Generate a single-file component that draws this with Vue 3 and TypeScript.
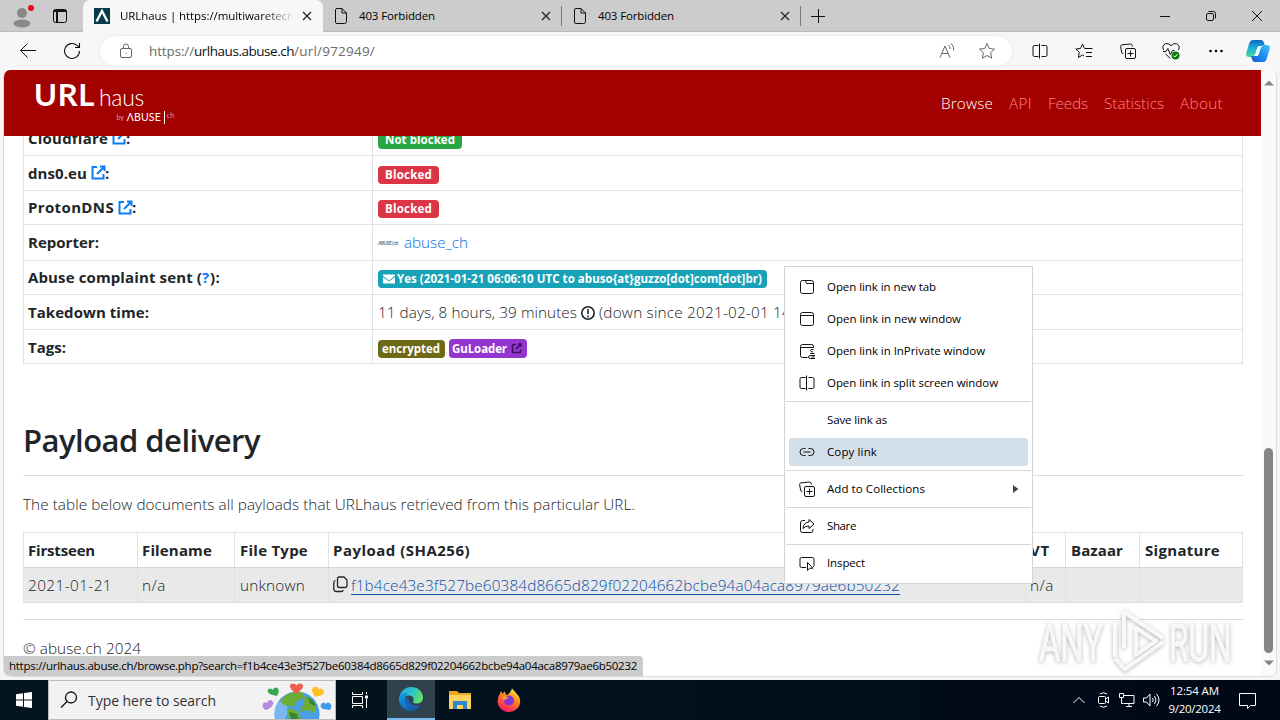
<script setup lang="ts">
interface Line { text: string; width: number }
interface MenuItem extends Line { icon?: string; active?: boolean; submenu?: boolean }

// Tracks a line of text so that it fills the given width in pixels.
const vFit = {
  mounted(el: HTMLElement, binding: { value: number }) {
    const natural = el.getBoundingClientRect().width
    const count = (el.textContent ?? '').length
    el.style.letterSpacing = `${(binding.value - natural) / count}px`
  },
}

const tabs: Line[] = [
  { text: '403 Forbidden', width: 76 },
  { text: '403 Forbidden', width: 76 },
]

const nav: Line[] = [
  { text: 'Browse', width: 52 },
  { text: 'API', width: 23 },
  { text: 'Feeds', width: 40 },
  { text: 'Statistics', width: 60 },
  { text: 'About', width: 43 },
]

const resolvers = [
  { name: 'Cloudflare', width: 80, verdict: 'Not blocked', verdictWidth: 70, kind: 'green', row: 'r35' },
  { name: 'dns0.eu', width: 59, verdict: 'Blocked', verdictWidth: 47, kind: 'red', row: 'r35' },
  { name: 'ProtonDNS', width: 86, verdict: 'Blocked', verdictWidth: 47, kind: 'red', row: 'r34' },
]

const columns: Line[] = [
  { text: 'Firstseen', width: 67 },
  { text: 'Filename', width: 70 },
  { text: 'File Type', width: 68 },
  { text: 'Payload (SHA256)', width: 137 },
  { text: 'VT', width: 20 },
  { text: 'Bazaar', width: 52 },
  { text: 'Signature', width: 75 },
]

const hash = 'f1b4ce43e3f527be60384d8665d829f02204662bcbe94a04aca8979ae6b50232'

const icons: Record<string, string> = {
  tab: 'M3.500 1.500h9a2 2 0 0 1 2 2v9a2 2 0 0 1-2 2h-9a2 2 0 0 1-2-2v-9a2 2 0 0 1 2-2zM7 1.500v2a1 1 0 0 0 1 1h6.500',
  window: 'M3.500 1.500h9a2 2 0 0 1 2 2v9a2 2 0 0 1-2 2h-9a2 2 0 0 1-2-2v-9a2 2 0 0 1 2-2zM1.500 4.500h13',
  inprivate: 'M8.500 14.500H3.500a2 2 0 0 1-2-2v-9a2 2 0 0 1 2-2h9a2 2 0 0 1 2 2V5M1.500 4.500h13M14.500 6.500q-3-.5-3 1t2.500 1.500M11 10.500h4.500M16 12.500h-4.500q-2 0-2 1.500t2 1.500h4.500M12.500 14h3',
  split: 'M6.500 2.500h-4a1.500 1.500 0 0 0-1.500 1.500v8a1.500 1.500 0 0 0 1.500 1.500h4M9.500 2.500h4a1.500 1.500 0 0 1 1.500 1.500v8a1.500 1.500 0 0 1-1.500 1.500h-4M7.500 .5v15',
  link: 'M6.500 4.500h-2a3.500 3.500 0 0 0 0 7h2M9.500 4.500h2a3.500 3.500 0 0 1 0 7h-2M4.500 8h7',
  collections: 'M7 5.500h7a1.500 1.500 0 0 1 1.500 1.500v7a1.500 1.500 0 0 1-1.500 1.500h-7a1.500 1.500 0 0 1-1.500-1.500v-7a1.500 1.500 0 0 1 1.500-1.500zM10.500 7.500v6M7.500 10.500h6M12.500 3.500l-.5-1.500a1.500 1.500 0 0 0-1.500-1l-8.700.9A1.500 1.500 0 0 0 .6 3.500l1 5.500a2 2 0 0 0 1.700 1.700',
  share: 'M6 2.500H4a2.500 2.500 0 0 0-2.500 2.500v7.500a2 2 0 0 0 2 2h8.500a2 2 0 0 0 2-2v-1.500M10 1.500l5 4.500-5 4.500v-2.500q-4 0-6 2.500 .5-6 6-6.500z',
  inspect: 'M7 12.500H2.500a1.500 1.500 0 0 1-1.500-1.500V4a1.500 1.500 0 0 1 1.500-1.500h11a1.500 1.500 0 0 1 1.500 1.500v6.500a1.500 1.500 0 0 1-1 1.500M8.500 7.500v8l2.200-2.300h3.300z',
}

const menu: MenuItem[][] = [
  [
    { text: 'Open link in new tab', width: 109, icon: 'tab' },
    { text: 'Open link in new window', width: 134, icon: 'window' },
    { text: 'Open link in InPrivate window', width: 158, icon: 'inprivate' },
    { text: 'Open link in split screen window', width: 171, icon: 'split' },
  ],
  [
    { text: 'Save link as', width: 60 },
    { text: 'Copy link', width: 50, icon: 'link', active: true },
  ],
  [{ text: 'Add to Collections', width: 98, icon: 'collections', submenu: true }],
  [{ text: 'Share', width: 29, icon: 'share' }],
  [{ text: 'Inspect', width: 38, icon: 'inspect' }],
]
</script>

<template>
  <div class="desktop">
    <header class="titlebar">
      <div class="corner">
        <svg class="profile" width="26" height="26" viewBox="0 0 26 26">
          <circle cx="13" cy="10" r="5" fill="#8b8987" /><ellipse cx="13" cy="20.500" rx="8.500" ry="4" fill="#8b8987" />
          <circle cx="22" cy="5" r="3" fill="#e00b1c" />
        </svg>
        <svg class="line" width="16" height="16" viewBox="0 0 16 16">
          <rect x="1.500" y="1.500" width="13" height="13" rx="2" /><path d="M1.500 3h13M5 4v10" stroke-width="2" />
        </svg>
      </div>
      <div class="tab current">
        <svg class="favicon" width="16" height="16" viewBox="0 0 16 16">
          <rect width="16" height="16" fill="#043c4a" /><path d="M2.500 13.500L8 3l5.500 10.500" fill="none" stroke="#fff" stroke-width="2.300" />
        </svg>
        <span class="title"><span v-fit="174">URLhaus | https://multiwaretecn</span></span>
        <svg class="close" width="10" height="10" viewBox="0 0 10 10"><path d="M1 1l8 8M9 1l-8 8" /></svg>
      </div>
      <div v-for="(tab, i) in tabs" :key="i" class="tab idle">
        <svg class="line" width="14" height="18" viewBox="0 0 14 18">
          <path d="M3 1.500h5l4.500 4.500v8.500a2 2 0 0 1-2 2H3a1.500 1.500 0 0 1-1.500-1.500V3A1.500 1.500 0 0 1 3 1.500zM8 1.500V6h4.500" />
        </svg>
        <span class="title"><span v-fit="tab.width">{{ tab.text }}</span></span>
        <svg class="close" width="10" height="10" viewBox="0 0 10 10"><path d="M1 1l8 8M9 1l-8 8" /></svg>
      </div>
      <svg class="plus line" width="14" height="14" viewBox="0 0 14 14"><path d="M7.500 0v14M0 7.500h14" /></svg>
      <div class="controls">
        <svg class="line" width="12" height="12" viewBox="0 0 12 12"><path d="M1 6.500h10" /></svg>
        <svg class="line" width="12" height="12" viewBox="0 0 12 12"><rect x="1.500" y="3.500" width="7" height="7" rx="1.500" /><path d="M3.500 1.500h5a2 2 0 0 1 2 2v5" /></svg>
        <svg class="line" width="12" height="12" viewBox="0 0 12 12"><path d="M1 1l10 10M11 1L1 11" /></svg>
      </div>
    </header>

    <div class="toolbar">
      <svg class="line back" width="18" height="16" viewBox="0 0 18 16"><path d="M17 7.500H1.500M8.500 .5L1.500 7.500l7 7" /></svg>
      <svg class="line reload" width="18" height="18" viewBox="0 0 18 18"><path d="M16.500 9a7.500 7.500 0 1 1-2.500-5.600l2 1.600M16.500 1v4.500H12" stroke-width="1.100" /></svg>
      <div class="address">
        <svg class="line grey" width="14" height="16" viewBox="0 0 14 16"><rect x="1.500" y="5.500" width="11" height="9" rx="1.500" /><path d="M4.500 5.500V3.500a2.500 2.500 0 0 1 5 0v2M6.500 10h1" /></svg>
        <div class="url"><span v-fit="45">https://</span><b v-fit="100">urlhaus.abuse.ch</b><span v-fit="81">/url/972949/</span></div>
        <svg class="line grey read" width="16" height="16" viewBox="0 0 16 16"><path d="M1 14.500L6 3l5 11.500M3 10.500h6M9.500 2q2 1.500 1.500 4M12 .5q3.500 3 2.500 7" /></svg>
        <svg class="line grey star" width="18" height="18" viewBox="0 0 18 18"><path d="M9 1.500l2.300 5 5.200.6-3.900 3.600 1.100 5.500L9 13.500l-4.700 2.700 1.100-5.500L1.500 7.100l5.200-.6z" /></svg>
      </div>
      <div class="tools">
        <svg class="line" width="16" height="16" viewBox="0 0 16 16"><path :d="icons.split" /></svg>
        <svg class="line" width="18" height="18" viewBox="0 0 18 18"><path d="M11 6.500H9.500L7.500 2 5.500 6.500.8 7l3.500 3.300-1 5.200 4.200-2.500 1.500 1M11 6.500h6.500M11 10.500h6M11 14.500h6" /></svg>
        <svg class="line" width="16" height="16" viewBox="0 0 16 16"><path :d="icons.collections" /></svg>
        <svg class="line" width="18" height="18" viewBox="0 0 18 18"><path d="M1.500 8q-2-4.500 2-6.300 3-.9 5.500 2 2.500-2.900 5.500-2 4 1.800 2 6.300M3.500 12l5 4.500M1 9.500h3l1.800-3 2.500 6 2.200-4h2" /><circle cx="13.500" cy="13.500" r="4" fill="#107c10" stroke="none" /><path d="M11.500 13.700l1.300 1.300 2.700-2.900" stroke="#fff" /></svg>
        <svg width="18" height="18" viewBox="0 0 18 18"><circle cx="3.500" cy="9" r="1.300" /><circle cx="9" cy="9" r="1.300" /><circle cx="14.500" cy="9" r="1.300" /></svg>
      </div>
      <svg class="copilot" width="24" height="24" viewBox="0 0 24 24">
        <defs>
          <linearGradient id="cpA" x1="0" y1="0" x2="0" y2="1"><stop offset="0" stop-color="#1264c4" /><stop offset=".5" stop-color="#16b6d8" /><stop offset="1" stop-color="#4fd59a" /></linearGradient>
          <linearGradient id="cpB" x1="1" y1="0" x2="0" y2="1"><stop offset="0" stop-color="#43c2ff" /><stop offset=".5" stop-color="#1b8ff0" /><stop offset="1" stop-color="#1556ce" /></linearGradient>
        </defs>
        <path d="M7 1h8q2 0 2.700 2L19 7h-5q-2 0-2.700 2l-2 7q-.6 2-3 2H3q-3.500 0-2.700-4L3.500 3.500Q4.300 1 7 1z" fill="url(#cpA)" />
        <path d="M17 23H9q-2 0-2.700-2L5 17h5q2 0 2.700-2l2-7q.6-2 3-2H21q3.500 0 2.700 4l-3.200 10.500Q19.700 23 17 23z" fill="url(#cpB)" />
        <path d="M14 7h3q-2 .5-2.500 2.500l-1.500 5q-.7 2.500-3 2.500H7q2-.5 2.500-2.500l1.500-5q.7-2.500 3-2.500z" fill="#fff" />
      </svg>
    </div>

    <div class="viewport">
      <div class="page">
        <div class="banner">
          <div class="logo">
            <div class="wordmark"><b v-fit="61">URL</b><span v-fit="45">haus</span></div>
            <div class="byline"><i>by</i><b v-fit="34">ΛBUSE</b><sup>ch</sup></div>
          </div>
          <nav><span v-for="item in nav" :key="item.text" v-fit="item.width">{{ item.text }}</span></nav>
        </div>

        <main>
          <div class="facts">
            <div v-for="r in resolvers" :key="r.name" class="fact" :class="r.row">
              <div class="label">
                <span v-fit="r.width">{{ r.name }}</span>
                <svg class="ext" width="15" height="15" viewBox="0 0 15 15"><path d="M6 2H1.500v11.500h11V9M9 1.500h4.500V6M13 2L6 9" /></svg><span>:</span>
              </div>
              <div class="value"><span class="badge" :class="r.kind"><span v-fit="r.verdictWidth">{{ r.verdict }}</span></span></div>
            </div>
            <div class="fact r36">
              <div class="label"><span v-fit="71">Reporter:</span></div>
              <div class="value"><i class="avatar" v-fit="20">ABUSE|ch</i><a class="reporter" v-fit="64">abuse_ch</a></div>
            </div>
            <div class="fact r34">
              <div class="label"><span v-fit="174">Abuse complaint sent (</span><a v-fit="8">?</a><span v-fit="10">):</span></div>
              <div class="value">
                <span class="badge cyan">
                  <svg width="12" height="10" viewBox="0 0 13 10"><path d="M0 0h13v1.500L6.500 6.500 0 1.500zM0 2.800l6.500 5 6.500-5V10H0z" fill="#fff" /></svg>
                  <span v-fit="365">Yes (2021-01-21 06:06:10 UTC to abuso{at}guzzo[dot]com[dot]br)</span>
                </span>
              </div>
            </div>
            <div class="fact r35">
              <div class="label"><span v-fit="121">Takedown time:</span></div>
              <div class="value">
                <span v-fit="199">11 days, 8 hours, 39 minutes</span>
                <svg class="alert" width="14" height="14" viewBox="0 0 14 14"><circle cx="7" cy="7" r="6.200" /><path d="M7 3v5M7 9.500v2" /></svg>
                <span v-fit="192">(down since 2021-02-01 14</span>
              </div>
            </div>
            <div class="fact r34">
              <div class="label low"><span v-fit="38">Tags:</span></div>
              <div class="value tags">
                <span class="badge olive"><span v-fit="58">encrypted</span></span>
                <span class="badge violet"><span v-fit="55">GuLoader</span><svg width="11" height="11" viewBox="0 0 11 11"><path d="M5 1.500H2.500a1 1 0 0 0-1 1v6a1 1 0 0 0 1 1h6a1 1 0 0 0 1-1V6.500M7 1h3v3M10 1L5 6" /></svg></span>
              </div>
            </div>
          </div>

          <h2><span v-fit="237">Payload delivery</span></h2>
          <hr>
          <p><span v-fit="612">The table below documents all payloads that URLhaus retrieved from this particular URL.</span></p>

          <div class="payloads">
            <div class="prow head"><div v-for="c in columns" :key="c.text"><span v-fit="c.width">{{ c.text }}</span></div></div>
            <div class="prow body">
              <div><span v-fit="84">2021-01-21</span></div>
              <div><span v-fit="24">n/a</span></div>
              <div><span v-fit="65">unknown</span></div>
              <div>
                <svg class="copy" width="15" height="17" viewBox="0 0 15 17"><path d="M6 1h5l3 3v5.500a2 2 0 0 1-2 2H6.500a2 2 0 0 1-2-2V2.500A1.500 1.500 0 0 1 6 1zM2.500 4.500Q.8 5 .8 6.500v6.500a2.500 2.500 0 0 0 2.500 2.500h5q1.500 0 2-1.500" /></svg>
                <a class="hash"><span v-fit="549">{{ hash }}</span></a>
              </div>
              <div><span v-fit="24">n/a</span></div>
              <div></div>
              <div></div>
            </div>
          </div>
          <hr class="end">
          <footer><span v-fit="118">© abuse.ch 2024</span></footer>
        </main>
      </div>
      <div class="scrollbar">
        <svg width="10" height="6" viewBox="0 0 10 6"><path d="M0 5.500L5 .5l5 5z" /></svg>
        <div class="thumb"></div>
        <svg width="10" height="6" viewBox="0 0 10 6"><path d="M0 .5h10l-5 5z" /></svg>
      </div>
      <div class="status"><span v-fit="628">https://urlhaus.abuse.ch/browse.php?search={{ hash }}</span></div>
    </div>

    <div class="menu">
      <template v-for="(group, g) in menu" :key="g">
        <div v-if="g" class="sep"></div>
        <div v-for="item in group" :key="item.text" class="item" :class="{ active: item.active }">
          <svg class="line" width="16" height="16" viewBox="0 0 16 16"><path v-if="item.icon" :d="icons[item.icon]" /></svg>
          <span v-fit="item.width">{{ item.text }}</span>
          <svg v-if="item.submenu" class="arrow" width="6" height="8" viewBox="0 0 6 8"><path d="M0 0l5.500 4L0 8z" /></svg>
        </div>
      </template>
    </div>

    <svg class="watermark" width="204" height="72" viewBox="0 0 204 72">
      <g class="mark">
        <text transform="translate(4 55) scale(.63 1)">ANY</text>
        <text transform="translate(134 55) scale(.61 1)">RUN</text>
        <path d="M80 17v34M89 6l39 26M89 6v36M89 64l39-28M101 22l20 13-20 14zM80 52l10 12" />
      </g>
    </svg>

    <div class="taskbar">
      <div class="start"><svg width="16" height="16" viewBox="0 0 16 16"><path d="M0 2.300L7 1.300v6.300H0zM8 1.100L16 0v7.600H8zM0 8.500h7v6.200l-7-1zM8 8.500h8V16l-8-1.100z" fill="#fff" /></svg></div>
      <div class="search">
        <svg class="line" width="18" height="18" viewBox="0 0 18 18"><circle cx="11" cy="6.500" r="5.500" stroke-width="1.300" /><path d="M7 10.500l-6 6" stroke-width="1.300" /></svg>
        <span v-fit="128">Type here to search</span>
        <svg class="globe" width="74" height="37" viewBox="0 0 74 37">
          <circle cx="37" cy="32" r="22.500" fill="#4a9fe8" /><path d="M20 18q-5 6-5.500 14v5h10q6-8 1-16z" fill="#86bdf2" opacity=".8" />
          <path d="M26 13q8-4 16-3l3 6-8 3-3 6-10-2-4-4zM45 14q7 2 11 9l-2 9-6-4-8 2 4-10zM27 26l11 3 3 8H29z" fill="#6cab36" />
          <path d="M48 15q6 3 8 9l-6-2zM29 30l8 2 1 5h-7z" fill="#3c8433" />
          <path d="M36 12l-5-5q-3-5 2-5.500 2.500 0 3.500 2 1-2 3.500-2 4.500.5 2.500 5z" fill="#ef5e4c" />
          <path d="M17 14l-6-1.500Q6 10 8.500 7q2.500-1.500 4.500 1 .5-3 3-2.500 5 1.500 1 8.500z" fill="#36a852" />
          <path d="M55 15l-3-6q0-5 5-4 1.500.7 1.500 2.500 2-1.500 3.500-.5 4 3 0 6z" fill="#ffbe22" />
          <path d="M5 28q-4-4-1.500-7 2.500-1.500 3.500.5.5-3.500 4-3.500 4 2 1 6-2 3-7 4z" fill="#b28bdd" />
          <path d="M70 28l-7-1q-4-2.500-1.500-5.500Q64 20 66 22q1-2.500 3.500-1 3.500 2 .5 7z" fill="#3f9ce8" />
        </svg>
      </div>
      <div class="app"><svg class="line white" width="18" height="18" viewBox="0 0 18 18"><path d="M1.500 1v2.500h10V1M1.500 17v-2.500h10V17M1.500 5.500h10v7h-10zM15.500 1v2M15.500 8v9" /><path d="M14 4.500h3v3h-3z" fill="#fff" stroke="none" /></svg></div>
      <div class="app running">
        <svg width="24" height="24" viewBox="0 0 24 24">
          <defs>
            <linearGradient id="edA" x1="0" y1=".3" x2="1" y2=".6"><stop offset="0" stop-color="#25a6e5" /><stop offset=".55" stop-color="#2fc6c5" /><stop offset="1" stop-color="#67e35b" /></linearGradient>
            <linearGradient id="edB" x1="0" y1="0" x2="1" y2="1"><stop offset="0" stop-color="#169ee6" /><stop offset="1" stop-color="#0b4da0" /></linearGradient>
          </defs>
          <path d="M.2 11C1 4.500 6 0 12 0c7 0 12 5 12 10.500 0 4-3 6-6.500 6-3 0-4-1-3.500-2 2-3-.5-6-4-6-5 0-9 3.500-9.800 7.500z" fill="url(#edA)" />
          <path d="M.1 11C1 7.500 5 5.500 9 6c-3 3-3.500 8-.5 12 3 4 8 4.500 12.500 1.500-2.500 3-6 4.500-9.500 4.500C5 24-.5 18.500.1 11z" fill="url(#edB)" />
          <path d="M9 9c-4 4-2 11 4 12 4 .7 7-.5 9-2.500-7 1.500-13-2-13-9.500z" fill="#1c62b6" />
        </svg>
      </div>
      <div class="app"><svg width="22" height="20" viewBox="0 0 22 20"><path d="M0 1h8l2 2h12v15H0z" fill="#eba91b" /><path d="M0 5h22v14H0z" fill="#ffd45c" /><path d="M4 19v-8h14v8h-4v-4H8v4z" fill="#2b88cf" /><path d="M8 15h6v4H8z" fill="#ffd45c" /></svg></div>
      <div class="app"><svg width="24" height="24" viewBox="0 0 24 24">
        <defs><linearGradient id="fx" x1=".8" y1="0" x2=".3" y2="1"><stop offset="0" stop-color="#fff04a" /><stop offset=".4" stop-color="#ff8a1c" /><stop offset="1" stop-color="#f5156c" /></linearGradient></defs>
        <path d="M15 .5q2 2 4 4.500 4.500 4 4.200 9A11.300 10.500 0 0 1 .6 13q0-4 2.200-7L4 3q1 1 1.500 3Q7 3.500 8 3.500 8 6 10 7q3-1 5-6.500z" fill="url(#fx)" />
        <circle cx="12" cy="12.500" r="5" fill="#8138d3" /><path d="M5 9q4-2 7 1-3 0-3.500 2-3 0-3.500-3z" fill="#ff9a1f" />
      </svg></div>
      <div class="tray">
        <svg class="line white" width="12" height="12" viewBox="0 0 12 12"><path d="M.5 9L6 3.500 11.500 9" /></svg>
        <svg class="line white camera" width="14" height="18" viewBox="0 0 14 18"><rect x="1.500" y="5.500" width="7" height="7" rx="1" /><path d="M8.500 8l3-2v6l-3-2M3 3q3.500-2.500 7 0M3 15q3.500 2.500 7 0" /></svg>
        <svg class="line white" width="17" height="16" viewBox="0 0 17 16"><path d="M5 3.500h11v8H5.500M8 14.500h6M11 11.500v3M1.500 1.500h4v4h-4zM3.500 5.500v6h2" /></svg>
        <svg class="line white" width="17" height="16" viewBox="0 0 17 16"><path d="M.5 6h3l3.500-4v12L3.500 10H.5zM9.500 6q1.500 2 0 4M11.500 4q3 4 0 8M13.500 2q5 6 0 12" /></svg>
        <div class="clock"><span v-fit="49">12:54 AM</span><span v-fit="52">9/20/2024</span></div>
        <svg class="line white note" width="17" height="17" viewBox="0 0 17 17"><path d="M.5 1.500h16v12h-5l-3 3v-3h-8z" /></svg>
      </div>
    </div>
  </div>
</template>

<style>
html, body { margin: 0; background: #f3f3f3; overflow: hidden; }
</style>

<style scoped>
.desktop { position: relative; width: 1280px; height: 720px; display: flex; flex-direction: column; overflow: hidden; background: #f5f5f5; color: #000; font: 11.5px/16px "Open Sans", "Noto Sans", sans-serif; }
.desktop * { box-sizing: border-box; }
svg { display: block; flex: none; }
span, a, b, i { white-space: pre; }
.line { fill: none; stroke: #111; stroke-width: 1; overflow: visible; }
.grey { stroke: #666; }
.white { stroke: #fff; }

.titlebar { height: 32px; flex: none; display: flex; align-items: center; background: #ccc; border-bottom: 1px solid #bbb; }
.corner { width: 83px; padding-left: 9px; display: flex; align-items: center; gap: 17px; }
.tab { display: flex; align-items: center; }
.current { width: 240px; height: 32px; margin-bottom: -1px; padding-left: 11px; background: #f7f7f7; border-radius: 7px 7px 0 0; }
.favicon { margin-right: 10px; }
.title { flex: 1; overflow: hidden; }
.current .title { flex: none; width: 174px; mask-image: linear-gradient(90deg, #000 82%, transparent); }
.current .close { margin-left: 8px; }
.title > span { display: inline-block; }
.close { fill: none; stroke: #222; stroke-width: 1.200; }
.idle { width: 239px; height: 20px; padding: 0 10px 0 11px; border-right: 1px solid #777; }
.idle .title { margin-left: 11px; }
.plus { margin-left: 10px; }
.controls { margin-left: auto; padding-right: 17px; display: flex; gap: 34px; }

.toolbar { height: 38px; flex: none; display: flex; align-items: center; padding: 0 10px 0 19px; background: #f7f7f7; }
.reload { margin: 0 19px 0 26px; }
.address { width: 912px; height: 30px; display: flex; align-items: center; padding: 0 16px 0 19px; border-radius: 15px; background: #fff; box-shadow: 0 0 2px #ddd; }
.url { flex: 1; margin-left: 16px; display: flex; font-size: 13.500px; line-height: 20px; color: #6b6b6b; }
.url b { font-weight: 400; color: #111; }
.read { margin-right: 23px; }
.tools { width: 193px; margin-left: 20px; display: flex; align-items: center; justify-content: space-between; }
.copilot { margin-left: auto; }

.viewport { position: relative; width: 1274px; height: 607px; margin-left: 3px; flex: none; display: flex; overflow: hidden; background: #fff; border: solid #ddd; border-width: 0 1px 1px; border-radius: 7px; }
.page { width: 1257px; height: 606px; flex: none; overflow: hidden; color: #212529; font-size: 15.300px; line-height: 24px; font-weight: 300; }
.banner { position: relative; z-index: 1; height: 66px; display: flex; align-items: center; justify-content: space-between; padding: 0 38px 0 30px; background: #a30000; color: #fff; }
.logo { width: 140px; height: 58px; font-family: Lato, sans-serif; }
.wordmark { display: flex; align-items: baseline; gap: 4px; height: 36px; line-height: 40px; font-size: 31px; }
.wordmark b { font-weight: 700; }
.wordmark span { font-size: 23px; }
.byline { display: flex; justify-content: flex-end; align-items: center; gap: 3px; height: 14px; font-size: 10.500px; line-height: 14px; }
.byline i { font-size: 7px; font-style: normal; }
.byline sup { height: 13px; padding-left: 2px; border-left: 1px solid #fff; font-size: 7px; line-height: 8px; }
nav { display: flex; gap: 16px; color: #ff8585; }
nav span:first-child { color: #fff; }

main { width: 1220px; margin: -15px 0 0 19px; }
.fact { display: grid; grid-template-columns: 349px 1fr; border: solid #dee2e6; border-width: 0 1px 1px; }
.r34 { height: 34px; }
.r35 { height: 35px; }
.r36 { height: 36px; }
.label { display: flex; align-items: center; padding: 0 0 1px 4px; border-right: 1px solid #dee2e6; font-weight: 700; font-size: 15px; }
.label.low { padding-bottom: 0; }
.value { display: flex; align-items: center; padding: 0 5px 1px; }
.label a { color: #007bff; }
.ext { margin: 0 -1px 0 4px; fill: none; stroke: #0d7df5; stroke-width: 2; }
.badge { height: 18px; display: flex; align-items: center; margin-top: 4px; padding: 0 7px; border-radius: 4px; color: #fff; font-size: 11.500px; line-height: 18px; font-weight: 700; }
.green { background: #28a745; }
.red { background: #dc3545; }
.cyan { padding: 0 5px; gap: 2px; background: #17a2b8; }
.olive { padding: 0 5px 0 4px; background: #6d6915; }
.violet { height: 19px; padding: 0 5px 0 3px; gap: 4px; background: #9535d0; }
.violet path { fill: none; stroke: #3d0e5c; stroke-width: 1.500; }
.tags { gap: 4px; padding-top: 1px; }
.avatar { margin: 2px 6px 0 0; font-size: 5px; font-style: normal; color: #6c8799; font-weight: 700; }
.reporter { color: #0072e0; }
.alert { margin: 2px 4px 0; fill: none; stroke: #212529; stroke-width: 1.600; }

h2 { height: 39px; margin: 57px 0 15px; font-size: 31px; line-height: 39px; font-weight: 600; }
h2 span { display: inline-block; }
hr { height: 1px; margin: 0; border: 0; background: #dcdcdc; }
p { height: 24px; margin: 16px 0; }
.payloads { border: solid #dee2e6; border-width: 1px 1px 0; }
.prow { display: grid; grid-template-columns: 113px 97px 94px 697px 40px 74px 1fr; border-bottom: 1px solid #dcdfe2; }
.prow > div { display: flex; align-items: center; padding-left: 4px; border-left: 1px solid #dee2e6; }
.prow > div:first-child { border-left: 0; }
.prow > div:nth-child(3), .prow > div:nth-child(n + 6) { padding-left: 5px; }
.head { height: 35px; font-weight: 700; font-size: 15px; border-color: #d4d6d8; }
.body { height: 35px; background: #e9e9e9; }
.body > div { padding-bottom: 1px; }
.copy { margin-right: 3px; fill: none; stroke: #212529; stroke-width: 1.300; }
.hash { color: #0a4fa8; text-decoration: underline; text-underline-offset: 3px; }
.end { margin-top: 16px; }
footer { margin-top: 16px; }

.scrollbar { width: 15px; height: 606px; display: flex; flex-direction: column; align-items: center; padding: 10px 0; background: #fafafa; fill: #858585; }
.thumb { width: 9px; height: 205px; margin: auto 0 7px; border-radius: 5px; background: #858585; }
.status { position: absolute; left: 0; bottom: 0; width: 639px; height: 20px; padding-left: 5px; background: #ccc; border-radius: 0 4px 0 6px; font-size: 11.500px; line-height: 19px; }

.menu { position: absolute; left: 784px; top: 266px; width: 249px; height: 318px; display: flex; flex-direction: column; padding: 4px 4px 3px; background: #fff; border: 1px solid #d4d4d4; }
.item { height: 28px; margin: 2px 0; flex: none; padding: 0 9px 0 10px; display: flex; align-items: center; gap: 12px; border-radius: 3px; }
.item.active { width: 239px; background: #d3dfe9; }
.arrow { margin-left: auto; fill: #444; }
.sep { height: 1px; margin: 2px -3px; flex: none; background: #d5d5d5; }

.watermark { position: absolute; left: 1035px; top: 606px; filter: drop-shadow(0 1px 2px #aaa); }
.mark { fill: none; stroke: #fff; stroke-width: 4; opacity: .85; stroke-linejoin: round; }
.mark text { font: 400 52px Roboto, sans-serif; fill: #fff; stroke-width: 1; }

.taskbar { height: 40px; margin-top: 3px; flex: none; display: flex; align-items: center; background: linear-gradient(90deg, #03151f, #02101c 55%, #010716); color: #fff; }
.start { width: 48px; display: flex; justify-content: center; }
.search { width: 288px; height: 40px; display: flex; align-items: center; gap: 9px; padding-left: 11px; background: #f2f2f2; border: 1px solid #bbb; color: #333; font-size: 14px; }
.search > span { margin: 1px 0 0 1px; }
.globe { margin: 1px 1px 0 auto; }
.app { width: 49px; height: 40px; display: flex; align-items: center; justify-content: center; }
.search + .app { width: 48px; margin-right: 3px; }
.running { width: 48px; background: #30434d; border-bottom: 2px solid #76b9ed; }
.tray { margin-left: auto; display: flex; align-items: center; gap: 8px; padding-right: 24px; }
.tray > svg:first-child { margin-right: 4px; }
.camera { margin-right: -1px; }
.clock { width: 53px; display: flex; flex-direction: column; align-items: center; line-height: 18px; }
.note { margin-left: 10px; }
</style>
